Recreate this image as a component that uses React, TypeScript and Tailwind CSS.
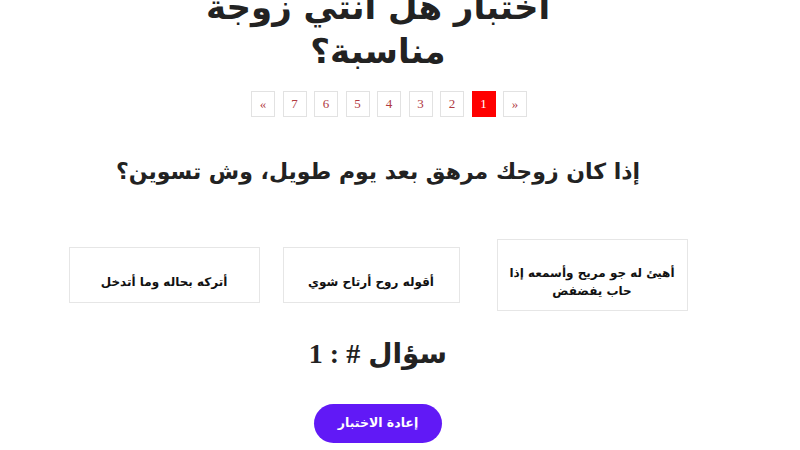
import React from "react";

const pages = ["«", "7", "6", "5", "4", "3", "2", "1", "»"];

const answers = [
  { text: "أهيئ له جو مريح وأسمعه إذا حاب يفضفض", w: "w-[191px]", h: "h-[72px]" },
  { text: "أقوله روح أرتاح شوي", w: "w-[177px]", h: "h-[56px]" },
  { text: "أتركه بحاله وما أتدخل", w: "w-[191px]", h: "h-[56px]" },
];

export default function App() {
  return (
    <div
      className="h-[450px] w-[800px] overflow-hidden bg-white text-[#222]"
      style={{ fontFamily: '"DejaVu Sans", "Noto Sans", sans-serif' }}
    >
      <div className="flex w-[756px] flex-col items-center" dir="rtl">
        <h1 className="-mt-[15px] w-[380px] text-center text-[34px] font-bold leading-[44px] text-[#222]">
          اختبار هل انتي زوجة مناسبة؟
        </h1>

        <div dir="ltr" className="mt-[18px] ml-[22px] flex gap-[7.5px]">
          {pages.map((p) => {
            const active = p === "1";
            return (
              <span
                key={p}
                className={
                  active
                    ? "flex h-[26px] w-[24px] items-center justify-center border border-[#f00] bg-[#f00] text-[13px] text-white"
                    : "flex h-[26px] w-[24px] items-center justify-center border border-[#e2e2e2] bg-white text-[13px] text-[#b0393f]"
                }
                style={{ fontFamily: '"Liberation Serif", serif' }}
              >
                {p}
              </span>
            );
          })}
        </div>

        <h2 className="mt-[38px] text-[22px] font-bold text-[#222]">
          إذا كان زوجك مرهق بعد يوم طويل، وش تسوين؟
        </h2>

        <div className="mt-[51px] flex items-center">
          {answers.map((a, i) => (
            <div
              key={i}
              className={`${a.w} ${a.h} ${i === 0 ? "ml-[37px]" : i === 1 ? "ml-[23px]" : ""} flex items-center justify-center border border-[#e6e6e6] px-2 pt-[14px] text-center text-[12px] font-bold leading-[18px] text-[#111]`}
            >
              {a.text}
            </div>
          ))}
        </div>

        <div className="mt-[22px] flex items-center gap-2 text-[28px] font-bold text-[#222]">
          <span>سؤال</span>
          <span dir="ltr" style={{ fontFamily: '"Liberation Serif", serif' }}>
            1 : #
          </span>
        </div>

        <button className="mt-[29px] h-[39px] w-[128px] rounded-full bg-[#6119f6] text-[12.5px] font-bold text-white">
          إعادة الاختبار
        </button>
      </div>
    </div>
  );
}
